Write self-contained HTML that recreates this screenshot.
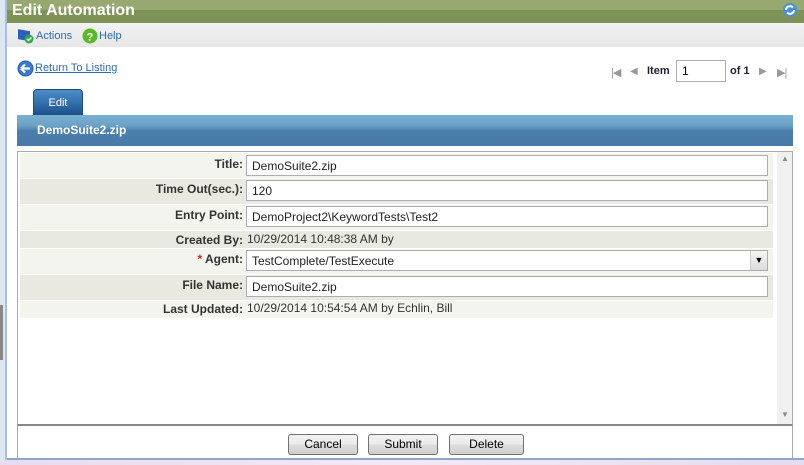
<!DOCTYPE html>
<html><head><style>
*{margin:0;padding:0;box-sizing:border-box}
body{width:804px;height:465px;overflow:hidden;background:#fff;font-family:"Liberation Sans",Arial,sans-serif;font-size:12px;position:relative}
.abs{position:absolute}
.lbl{position:absolute;right:561px;font-weight:bold;color:#333;font-size:12px;text-align:right}
.row{position:absolute;left:20px;width:753px}
.inp{position:absolute;left:246px;width:522px;height:21px;border:1px solid #abadb3;background:#fff;padding:3px 5px;font-size:12px;color:#222}
.val{position:absolute;left:247px;color:#333}
.btn{position:absolute;top:434px;height:21px;border:1px solid #707070;border-radius:3px;background:linear-gradient(#f2f2f2,#ebebeb 50%,#dddddd 51%,#cfcfcf);font-size:12px;text-align:center;line-height:19px;color:#000}
</style></head><body>
<div class="abs" style="left:0;top:0;width:7px;height:465px;background:#dde6f3;border-right:2px solid #a9bfe0"></div>
<div class="abs" style="left:0;top:305px;width:3px;height:55px;background:#888"></div>
<div class="abs" style="left:7px;top:0;width:797px;height:10px;background:#97a970"></div>
<div class="abs" style="left:7px;top:10px;width:797px;height:13px;background:#7f9356"></div>
<div class="abs" style="left:12px;top:2px;color:#fff;font-weight:bold;font-size:16px">Edit Automation</div>
<svg class="abs" style="left:782px;top:2px" width="16" height="16" viewBox="0 0 16 16"><circle cx="8" cy="8" r="7" fill="#4a8fd8"/><path d="M4 8a4 4 0 0 1 7-2.5M12 8a4 4 0 0 1-7 2.5" stroke="#fff" stroke-width="2" fill="none"/></svg>
<div class="abs" style="left:7px;top:23px;width:797px;height:24px;background:linear-gradient(#f3f3f3,#e6e6e6)"></div>
<svg class="abs" style="left:17px;top:28px" width="18" height="16"><rect x="1" y="1" width="12" height="10" fill="#2a5fbf" transform="skewY(10)"/><circle cx="12" cy="11" r="4.5" fill="#2fa84a"/><path d="M10 11l1.5 1.5 3-3" stroke="#fff" stroke-width="1.5" fill="none"/></svg>
<div class="abs" style="left:36px;top:30px;color:#2b6cb5;font-size:11px">Actions</div>
<svg class="abs" style="left:82px;top:28px" width="16" height="16"><circle cx="8" cy="8" r="7.5" fill="#5cb82a"/><text x="4.5" y="12.5" font-size="11" font-weight="bold" fill="#fff" font-family="Liberation Sans">?</text></svg>
<div class="abs" style="left:99px;top:30px;color:#2b6cb5;font-size:11px">Help</div>
<svg class="abs" style="left:17px;top:60px" width="17" height="17"><circle cx="8.5" cy="8.5" r="7.5" fill="#3a7ad0" stroke="#2a5ba8"/><path d="M4 8.5h9M4 8.5l4-4M4 8.5l4 4" stroke="#fff" stroke-width="2.2" fill="none"/></svg>
<div class="abs" style="left:35px;top:62px;color:#2b6cb5;font-size:11px;text-decoration:underline">Return To Listing</div>
<div class="abs" style="left:611px;top:66px;color:#999;font-size:11px;letter-spacing:-1px">|◀</div>
<div class="abs" style="left:630px;top:66px;color:#999;font-size:10px">◀</div>
<div class="abs" style="left:647px;top:65px;font-weight:bold;color:#223;font-size:11px">Item</div>
<div class="abs" style="left:676px;top:60px;width:50px;height:22px;border:1px solid #abadb3;padding:3px 5px;font-size:12px">1</div>
<div class="abs" style="left:730px;top:65px;font-weight:bold;color:#223;font-size:11px">of 1</div>
<div class="abs" style="left:759px;top:66px;color:#999;font-size:10px">▶</div>
<div class="abs" style="left:777px;top:66px;color:#999;font-size:11px;letter-spacing:-1px">▶|</div>
<div class="abs" style="left:33px;top:89px;width:50px;height:27px;border-radius:4px 4px 0 0;background:linear-gradient(#4b8cc8,#2e6aa8 60%,#1d4f88);border:1px solid #1d4a7e;color:#fff;font-size:11px;text-align:center;line-height:27px">Edit</div>
<div class="abs" style="left:17px;top:115px;width:776px;height:31px;background:linear-gradient(#7ab0d2,#6aa1c6 35%,#4a7fad 50%,#4a7aa8)"></div>
<div class="abs" style="left:37px;top:123px;color:#fff;font-weight:bold;font-size:12px">DemoSuite2.zip</div>
<div class="abs" style="left:17px;top:151px;width:776px;height:275px;border:1px solid #aaa;border-bottom:2px solid #888"></div>
<div class="abs" style="left:777px;top:152px;width:15px;height:272px;background:#f0f0f0"></div>
<div class="abs" style="left:781px;top:154px;color:#888;font-size:8px">▲</div>
<div class="abs" style="left:781px;top:410px;color:#888;font-size:8px">▼</div>
<div class="row" style="top:153px;height:25px;background:#f4f4ef"></div>
<div class="row" style="top:179px;height:25px;background:#e9e9e1"></div>
<div class="row" style="top:205px;height:25px;background:#f4f4ef"></div>
<div class="row" style="top:231px;height:17px;background:#e9e9e1"></div>
<div class="row" style="top:249px;height:25px;background:#f4f4ef"></div>
<div class="row" style="top:275px;height:25px;background:#e9e9e1"></div>
<div class="row" style="top:301px;height:17px;background:#f4f4ef"></div>
<div class="lbl" style="top:157px">Title:</div>
<div class="inp" style="top:155px">DemoSuite2.zip</div>
<div class="lbl" style="top:182px">Time Out(sec.):</div>
<div class="inp" style="top:180px">120</div>
<div class="lbl" style="top:208px">Entry Point:</div>
<div class="inp" style="top:206px">DemoProject2\KeywordTests\Test2</div>
<div class="lbl" style="top:233px">Created By:</div>
<div class="val" style="top:232px">10/29/2014 10:48:38 AM by</div>
<div class="lbl" style="top:252px"><span style="color:#d22">*</span> Agent:</div>
<div class="inp" style="top:250px">TestComplete/TestExecute</div>
<div class="abs" style="left:750px;top:251px;width:17px;height:19px;background:linear-gradient(#f5f5f5,#dcdcdc);border-left:1px solid #ccc;text-align:center;font-size:9px;line-height:19px">▼</div>
<div class="lbl" style="top:278px">File Name:</div>
<div class="inp" style="top:276px">DemoSuite2.zip</div>
<div class="lbl" style="top:302px">Last Updated:</div>
<div class="val" style="top:301px">10/29/2014 10:54:54 AM by Echlin, Bill</div>
<div class="btn" style="left:288px;width:70px">Cancel</div>
<div class="btn" style="left:368px;width:70px">Submit</div>
<div class="btn" style="left:449px;width:75px">Delete</div>
<div class="abs" style="left:17px;top:426px;width:1px;height:32px;background:#aaa"></div>
<div class="abs" style="left:792px;top:426px;width:1px;height:32px;background:#aaa"></div>
<div class="abs" style="left:7px;top:458px;width:797px;height:2px;background:#8fa6c8"></div>
<div class="abs" style="left:0;top:460px;width:804px;height:5px;background:linear-gradient(90deg,#e8dcef,#f4e8f4 50%,#e4dcef)"></div>
</body></html>
